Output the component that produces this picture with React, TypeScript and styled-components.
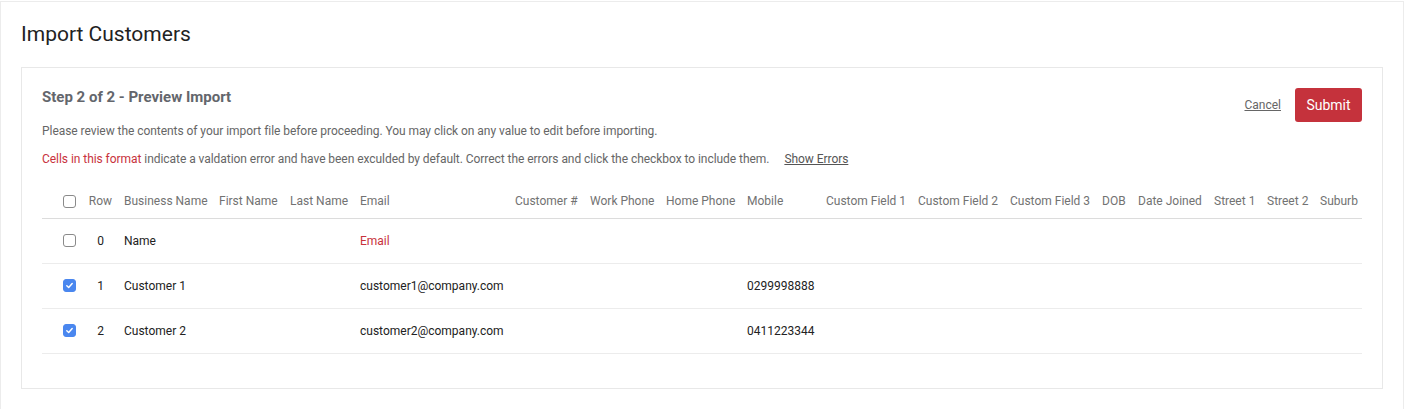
import React from "react";
import styled, { createGlobalStyle } from "styled-components";

const Global = createGlobalStyle`
  html, body { margin: 0; padding: 0; background: #ffffff; }
  body { font-family: Roboto, "Liberation Sans", Arial, sans-serif; color: #222; }
  * { box-sizing: border-box; }
`;

const Frame = styled.div`
  margin-top: 1px;
  width: 1404px;
  min-height: 420px;
  border: 1px solid #ececec;
  border-bottom: none;
  padding: 20px 20px 20px 20px;
  background: #fff;
`;

const PageTitle = styled.h1`
  margin: 0;
  font-size: 21px;
  line-height: 24px;
  font-weight: 400;
  color: #222;
`;

const Card = styled.section`
  margin-top: 21px;
  border: 1px solid #e8e8e8;
  padding: 20px 20px 34px 20px;
`;

const CardHeader = styled.div`
  display: flex;
  justify-content: space-between;
  align-items: flex-start;
  height: 34px;
`;

const StepTitle = styled.h2`
  margin: 0;
  font-size: 15px;
  line-height: 18px;
  font-weight: 700;
  color: #63666c;
`;

const Actions = styled.div`
  display: flex;
  align-items: center;
  gap: 14px;
`;

const LinkButton = styled.a`
  font-size: 12px;
  color: #666;
  text-decoration: underline;
  cursor: pointer;
`;

const SubmitButton = styled.button`
  height: 34px;
  width: 67px;
  border: none;
  border-radius: 3px;
  background: #c5323c;
  color: #fff;
  font-family: inherit;
  font-size: 14px;
  cursor: pointer;
`;

const Paragraph = styled.p<{ $gap?: number }>`
  margin: ${(p) => p.$gap ?? 0}px 0 0 0;
  font-size: 12px;
  line-height: 18px;
  letter-spacing: -0.05px;
  color: #666;
`;

const ErrorText = styled.span`
  color: #c8323c;
`;

const InlineLink = styled.a`
  margin-left: 15px;
  color: #555;
  text-decoration: underline;
  cursor: pointer;
`;

const Table = styled.table`
  margin-top: 17px;
  width: 1320px;
  table-layout: fixed;
  border-collapse: collapse;
  font-size: 12px;
`;

const Th = styled.th<{ $center?: boolean }>`
  height: 33px;
  padding: ${(p) => (p.$center ? "0" : "0 0 0 6px")};
  text-align: ${(p) => (p.$center ? "center" : "left")};
  font-weight: 400;
  color: #727272;
  white-space: nowrap;
  border-bottom: 1px solid #dcdcdc;
`;

const Td = styled.td<{ $center?: boolean; $error?: boolean }>`
  height: 45px;
  padding: ${(p) => (p.$center ? "0" : "0 0 0 6px")};
  text-align: ${(p) => (p.$center ? "center" : "left")};
  color: ${(p) => (p.$error ? "#c8323c" : "#222")};
  white-space: nowrap;
  border-bottom: 1px solid #ececec;
`;

const CheckCell = styled.div`
  display: flex;
  padding-left: 15px;
`;

const Box = styled.span<{ $checked?: boolean }>`
  display: inline-flex;
  align-items: center;
  justify-content: center;
  width: 13px;
  height: 13px;
  border-radius: 3px;
  border: 1px solid ${(p) => (p.$checked ? "#4a87ef" : "#8a8a8a")};
  background: ${(p) => (p.$checked ? "#4a87ef" : "#fff")};
`;

const Checkbox = ({ checked }: { checked?: boolean }) => (
  <Box $checked={checked}>
    {checked && (
      <svg width="9" height="9" viewBox="0 0 10 10">
        <path d="M2 5.3 L4.1 7.3 L8 2.8" fill="none" stroke="#fff" strokeWidth="1.6" strokeLinecap="round" strokeLinejoin="round" />
      </svg>
    )}
  </Box>
);

const columns: { label: string; width: number; key: string }[] = [
  { label: "Row", width: 35, key: "row" },
  { label: "Business Name", width: 95, key: "business" },
  { label: "First Name", width: 71, key: "first" },
  { label: "Last Name", width: 70, key: "last" },
  { label: "Email", width: 155, key: "email" },
  { label: "Customer #", width: 75, key: "custno" },
  { label: "Work Phone", width: 76, key: "work" },
  { label: "Home Phone", width: 81, key: "home" },
  { label: "Mobile", width: 79, key: "mobile" },
  { label: "Custom Field 1", width: 92, key: "cf1" },
  { label: "Custom Field 2", width: 92, key: "cf2" },
  { label: "Custom Field 3", width: 92, key: "cf3" },
  { label: "DOB", width: 36, key: "dob" },
  { label: "Date Joined", width: 76, key: "joined" },
  { label: "Street 1", width: 53, key: "s1" },
  { label: "Street 2", width: 53, key: "s2" },
  { label: "Suburb", width: 48, key: "suburb" },
];

type Row = { checked: boolean; values: Record<string, string>; errors?: string[] };

const rows: Row[] = [
  { checked: false, values: { row: "0", business: "Name", email: "Email" }, errors: ["email"] },
  { checked: true, values: { row: "1", business: "Customer 1", email: "customer1@company.com", mobile: "0299998888" } },
  { checked: true, values: { row: "2", business: "Customer 2", email: "customer2@company.com", mobile: "0411223344" } },
];

export default function App() {
  return (
    <>
      <Global />
      <Frame>
        <PageTitle>Import Customers</PageTitle>
        <Card>
          <CardHeader>
            <StepTitle>Step 2 of 2 - Preview Import</StepTitle>
            <Actions>
              <LinkButton>Cancel</LinkButton>
              <SubmitButton>Submit</SubmitButton>
            </Actions>
          </CardHeader>
          <Paragraph>
            Please review the contents of your import file before proceeding. You may click on any value to edit before importing.
          </Paragraph>
          <Paragraph $gap={10}>
            <ErrorText>Cells in this format</ErrorText> indicate a valdation error and have been exculded by default. Correct the errors and click the checkbox to include them.
            <InlineLink>Show Errors</InlineLink>
          </Paragraph>
          <Table>
            <colgroup>
              <col style={{ width: 41 }} />
              {columns.map((c) => (
                <col key={c.key} style={{ width: c.width }} />
              ))}
            </colgroup>
            <thead>
              <tr>
                <Th>
                  <CheckCell>
                    <Checkbox />
                  </CheckCell>
                </Th>
                {columns.map((c) => (
                  <Th key={c.key} $center={c.key === "row"}>
                    {c.label}
                  </Th>
                ))}
              </tr>
            </thead>
            <tbody>
              {rows.map((r, i) => (
                <tr key={i}>
                  <Td>
                    <CheckCell>
                      <Checkbox checked={r.checked} />
                    </CheckCell>
                  </Td>
                  {columns.map((c) => (
                    <Td key={c.key} $center={c.key === "row"} $error={r.errors?.includes(c.key)}>
                      {r.values[c.key] ?? ""}
                    </Td>
                  ))}
                </tr>
              ))}
            </tbody>
          </Table>
        </Card>
      </Frame>
    </>
  );
}
